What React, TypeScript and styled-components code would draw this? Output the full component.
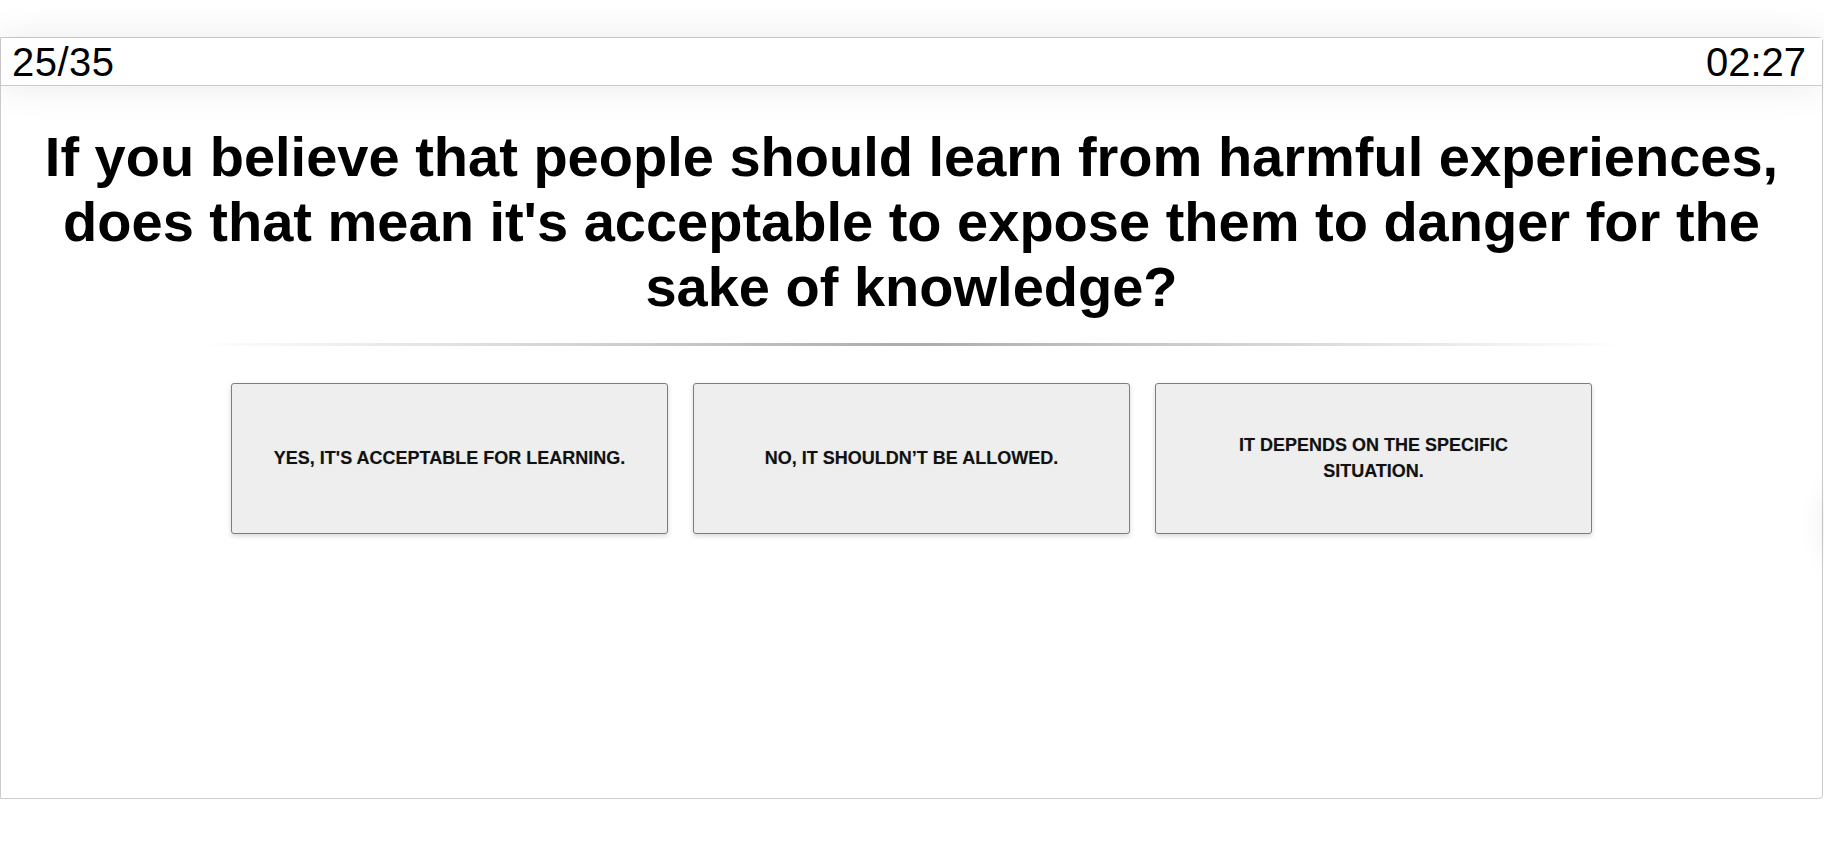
import React from "react";
import styled, { createGlobalStyle } from "styled-components";

const GlobalStyle = createGlobalStyle`
  html, body {
    margin: 0;
    padding: 0;
    background: #ffffff;
    overflow: hidden;
  }
  body {
    font-family: "Liberation Sans", Arial, sans-serif;
    color: #000;
  }
  * { box-sizing: border-box; }
`;

const Page = styled.div`
  position: relative;
  width: 100%;
  height: 851px;
  padding-top: 37px;
  overflow: hidden;
`;

const Card = styled.div`
  position: relative;
  width: 1823px;
  height: 762px;
  border: 1px solid #cccccc;
  border-radius: 0 4px 4px 0;
  background: #ffffff;
  display: flex;
  flex-direction: column;
  align-items: center;
`;

const TopBar = styled.div`
  position: relative;
  z-index: 1;
  width: 100%;
  height: 48px;
  display: flex;
  align-items: center;
  justify-content: space-between;
  padding: 0 16px 0 11px;
  background: #ffffff;
  border-bottom: 1px solid #cccccc;
  box-shadow: 0 0 38px rgba(0, 0, 0, 0.09);
  font-family: "Liberation Sans", Arial, sans-serif;
  font-size: 40px;
  line-height: 46px;
  color: #000;
`;

const Counter = styled.span`
  letter-spacing: 0.5px;
`;

const Question = styled.h1`
  margin: 38px 0 0;
  padding: 0 20px;
  width: 100%;
  text-align: center;
  font-family: "Liberation Sans", Arial, sans-serif;
  font-weight: 700;
  font-size: 56px;
  line-height: 65px;
  color: #000;
`;

const Divider = styled.div`
  margin-top: 24px;
  width: 1425px;
  height: 3px;
  background: linear-gradient(
    to right,
    rgba(172, 172, 172, 0),
    #acacac 50%,
    rgba(172, 172, 172, 0)
  );
`;

const Options = styled.div`
  margin-top: 37px;
  display: grid;
  grid-template-columns: repeat(3, 437px);
  column-gap: 25px;
`;

const Option = styled.button`
  height: 151px;
  padding: 0 35px;
  display: flex;
  align-items: center;
  justify-content: center;
  text-align: center;
  background: #eeeeee;
  border: 1px solid #7d7d7d;
  border-radius: 3px;
  box-shadow: 0 2px 5px rgba(0, 0, 0, 0.16);
  font-family: "Liberation Sans", Arial, sans-serif;
  font-weight: 700;
  font-size: 18px;
  line-height: 25.5px;
  text-transform: uppercase;
  color: #111;
  text-shadow: 0 0 1px rgba(0, 0, 0, 0.25);
  cursor: pointer;
`;

const EdgeGlow = styled.div`
  position: absolute;
  left: 1826px;
  top: 480px;
  width: 80px;
  height: 90px;
  border-radius: 50%;
  background: #ffffff;
  box-shadow: 0 0 32px rgba(0, 0, 0, 0.1);
`;

const options = [
  "Yes, it's acceptable for learning.",
  "No, it shouldn’t be allowed.",
  "It depends on the specific situation.",
];

export default function App() {
  return (
    <>
      <GlobalStyle />
      <Page>
        <Card>
          <TopBar>
            <Counter>25/35</Counter>
            <span>02:27</span>
          </TopBar>
          <Question>
            If you believe that people should learn from harmful experiences,
            does that mean it's acceptable to expose them to danger for the
            sake of knowledge?
          </Question>
          <Divider />
          <Options>
            {options.map((o) => (
              <Option key={o}>{o}</Option>
            ))}
          </Options>
        </Card>
        <EdgeGlow />
      </Page>
    </>
  );
}
